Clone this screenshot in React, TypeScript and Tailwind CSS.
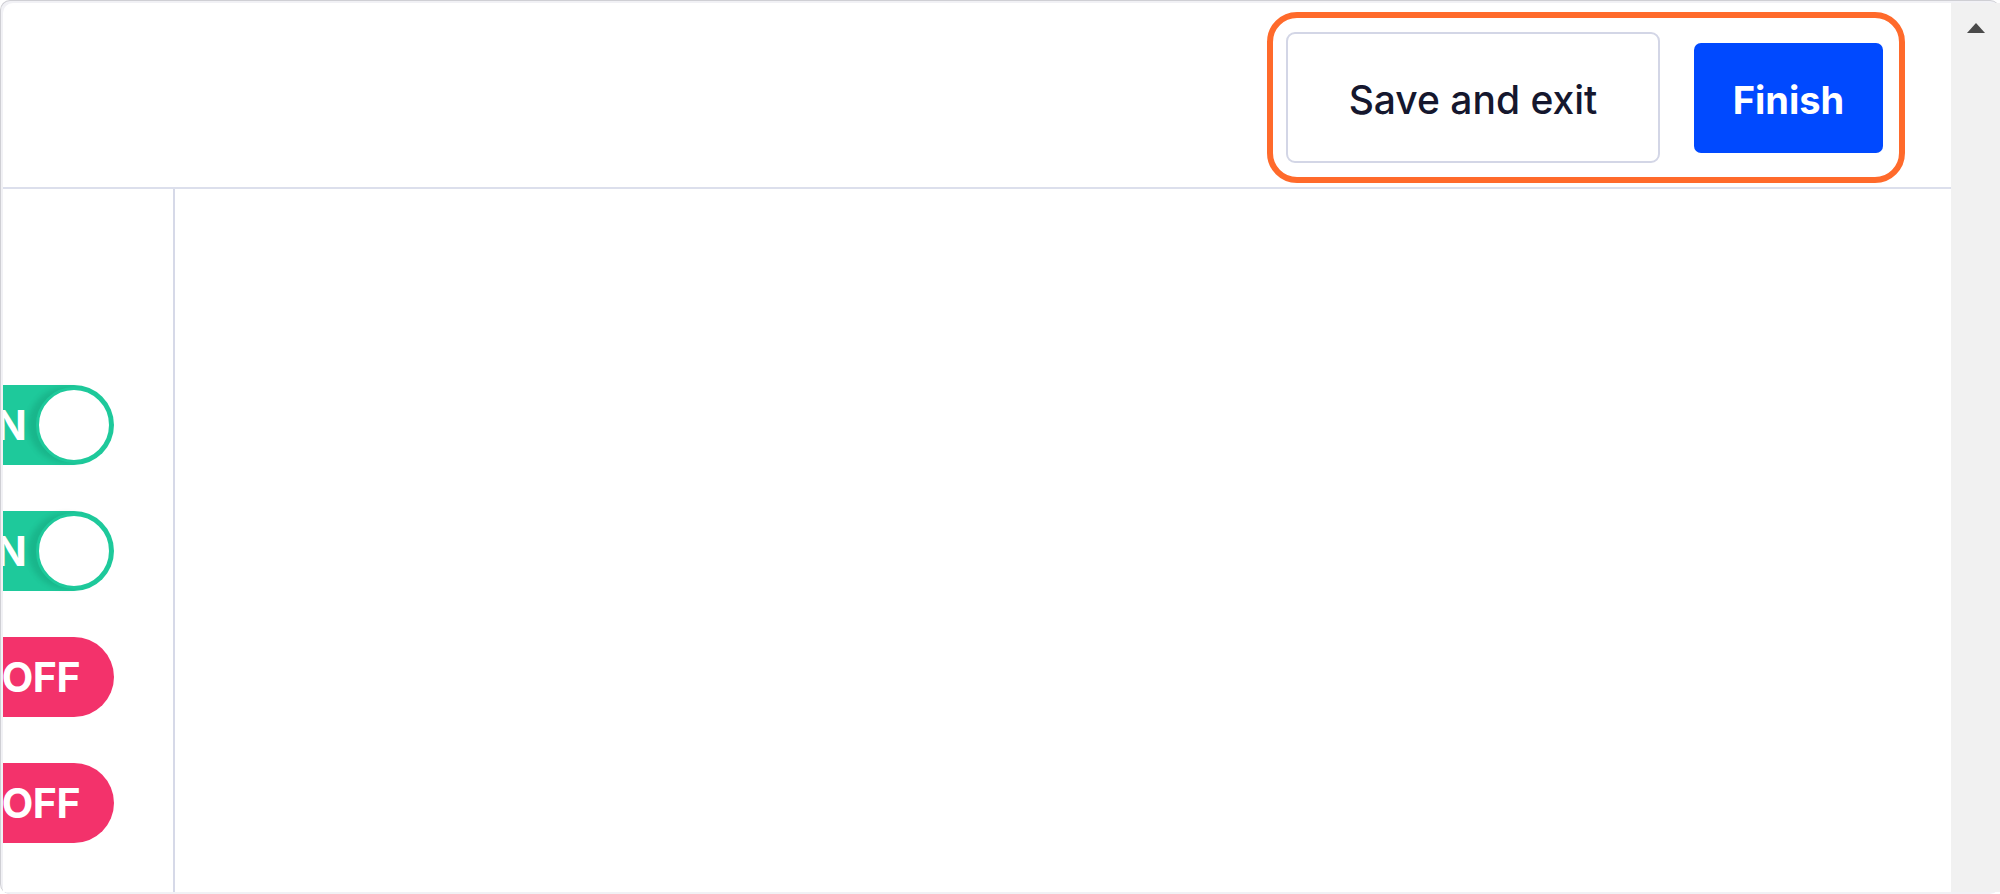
import React from "react";

function OnToggle() {
  return (
    <div className="ml-[-59px] flex h-[80px] w-[170px] shrink-0 items-center justify-between rounded-full bg-[#1ec99b] pl-[20px] pr-[2px]">
      <span className="text-[41px] font-bold leading-none text-white" style={{ fontFamily: "Inter, 'Liberation Sans', sans-serif" }}>
        ON
      </span>
      <span className="h-[76px] w-[76px] rounded-full border-[3px] border-[#1ec99b] bg-white shadow-[-8px_0_5px_rgba(0,90,60,0.16)]" />
    </div>
  );
}

function OffToggle() {
  return (
    <div className="ml-[-59px] flex h-[80px] w-[170px] shrink-0 items-center justify-end rounded-full bg-[#f3326b] pr-[34px]">
      <span className="text-[41px] font-bold leading-none tracking-[-0.5px] text-white" style={{ fontFamily: "Inter, 'Liberation Sans', sans-serif" }}>
        OFF
      </span>
    </div>
  );
}

export default function App() {
  return (
    <div className="h-[894px] w-[2000px] overflow-hidden bg-white">
      <div className="flex h-full w-full rounded-[10px] border-t border-l border-[#cfcfd4] bg-[#f1f1f5] pl-[2px] pt-[2px] pb-[2px]">
        <div className="flex min-w-0 flex-1 flex-col overflow-hidden rounded-tl-[10px] bg-white">
          {/* Header */}
          <div className="flex h-[186px] shrink-0 items-start justify-end border-b-[2px] border-[#dcdfec] pr-[46px] pt-[9px]">
            <div className="flex items-center gap-[34px] rounded-[30px] border-[6px] border-[#ff6a2b] py-[14px] pl-[13px] pr-[16px]">
              <button
                className="flex h-[131px] w-[374px] items-center justify-center rounded-[9px] border-[2px] border-[#d3d6e6] bg-white pt-[5px] text-[39px] font-medium text-[#15172e]"
                style={{ fontFamily: "Inter, 'Liberation Sans', sans-serif" }}
              >
                Save and exit
              </button>
              <button
                className="flex h-[110px] w-[189px] items-center justify-center rounded-[7px] bg-[#0049ff] pt-[5px] text-[38px] font-bold text-white"
                style={{ fontFamily: "Inter, 'Liberation Sans', sans-serif" }}
              >
                Finish
              </button>
            </div>
          </div>
          {/* Body */}
          <div className="flex min-h-0 flex-1">
            <div className="flex w-[172px] shrink-0 flex-col gap-[46px] overflow-hidden border-r-[2px] border-[#d6d9e8] pt-[196px]">
              <OnToggle />
              <OnToggle />
              <OffToggle />
              <OffToggle />
            </div>
            <div className="flex-1 bg-white" />
          </div>
        </div>
        {/* Scrollbar */}
        <div className="flex w-[49px] shrink-0 justify-center bg-[#f1f1f1] pt-[18px]">
          <svg width="22" height="14" viewBox="0 0 22 14">
            <polygon points="11,2 20,12 2,12" fill="#4a4a4a" />
          </svg>
        </div>
      </div>
    </div>
  );
}
